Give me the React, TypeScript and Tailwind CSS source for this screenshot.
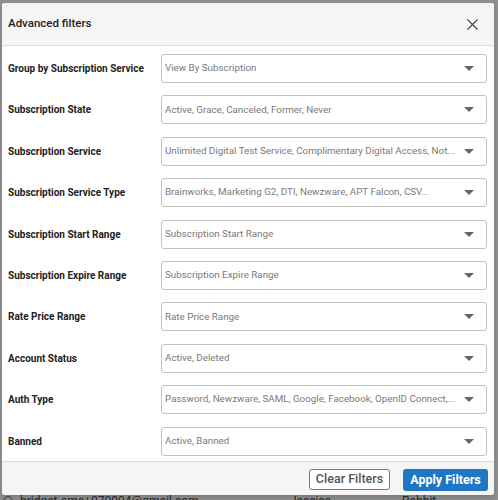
import { X } from 'lucide-react'

const filters = [
  { label: 'Group by Subscription Service', value: 'View By Subscription' },
  { label: 'Subscription State', value: 'Active, Grace, Canceled, Former, Never' },
  { label: 'Subscription Service', value: 'Unlimited Digital Test Service, Complimentary Digital Access, Not...' },
  { label: 'Subscription Service Type', value: 'Brainworks, Marketing G2, DTI, Newzware, APT Falcon, CSV...' },
  { label: 'Subscription Start Range', value: 'Subscription Start Range' },
  { label: 'Subscription Expire Range', value: 'Subscription Expire Range' },
  { label: 'Rate Price Range', value: 'Rate Price Range' },
  { label: 'Account Status', value: 'Active, Deleted' },
  { label: 'Auth Type', value: 'Password, Newzware, SAML, Google, Facebook, OpenID Connect,...' },
  { label: 'Banned', value: 'Active, Banned' },
]

function SelectBox({ value }: { value: string }) {
  return (
    <div className="flex-1 min-w-0 h-[29px] border border-[#c2c2c2] rounded-[3px] bg-white flex items-center pl-[3px] pr-[12px]">
      <span className="flex-1 min-w-0 truncate text-[9.8px] text-[#7a7a7a]">{value}</span>
      <svg width="10" height="5" viewBox="0 0 10 5" className="ml-2 shrink-0">
        <path d="M0 0 L10 0 L5 5 Z" fill="#666" />
      </svg>
    </div>
  )
}

export default function App() {
  return (
    <div
      className="relative w-[498px] h-[500px] overflow-hidden bg-[#8f8f8f] pt-[3px] pl-[2px]"
      style={{ fontFamily: 'Roboto, "Liberation Sans", sans-serif' }}
    >
      {/* page content peeking below the dialog */}
      <div className="absolute left-0 top-[494px] w-full flex items-center text-[12px] leading-[14px] text-[#2a2a2a]">
        <span className="ml-[3px] w-[10px] h-[10px] rounded-full border border-[#444]" />
        <span className="ml-[7px] w-[270px]">bridget.ame+070904@gmail.com</span>
        <span className="w-[112px]">Jessica</span>
        <span>Rabbit</span>
      </div>

      <div className="relative w-[492px] h-[492px] bg-white rounded-[3px] shadow-md flex flex-col overflow-hidden">
        <div className="h-[43px] shrink-0 bg-[#f5f5f5] border-b border-[#dcdcdc] flex items-center justify-between pl-[6px] pr-[12px]">
          <span className="text-[11.5px] font-medium text-[#222]">Advanced filters</span>
          <X size={19} strokeWidth={1.4} className="text-[#444]" />
        </div>

        <div className="flex-1 flex flex-col gap-[12.4px] pt-[8px] pl-[6px] pr-[7px]">
          {filters.map((f) => (
            <div key={f.label} className="flex items-center">
              <span className="w-[153px] shrink-0 text-[10px] font-bold text-[#222]">{f.label}</span>
              <SelectBox value={f.value} />
            </div>
          ))}
        </div>

        <div className="h-[34px] shrink-0 bg-[#f5f5f5] border-t border-[#dcdcdc] flex items-start justify-end gap-[13px] pt-[7px] pr-[6px]">
          <button className="h-[21px] w-[81px] border border-[#777] rounded-[3px] bg-white text-[12.5px] font-medium text-[#555] flex items-center justify-center">
            Clear Filters
          </button>
          <button className="h-[22px] w-[85px] rounded-[3px] bg-[#1f77c4] text-[12.5px] font-bold text-white flex items-center justify-center">
            Apply Filters
          </button>
        </div>
      </div>
    </div>
  )
}
